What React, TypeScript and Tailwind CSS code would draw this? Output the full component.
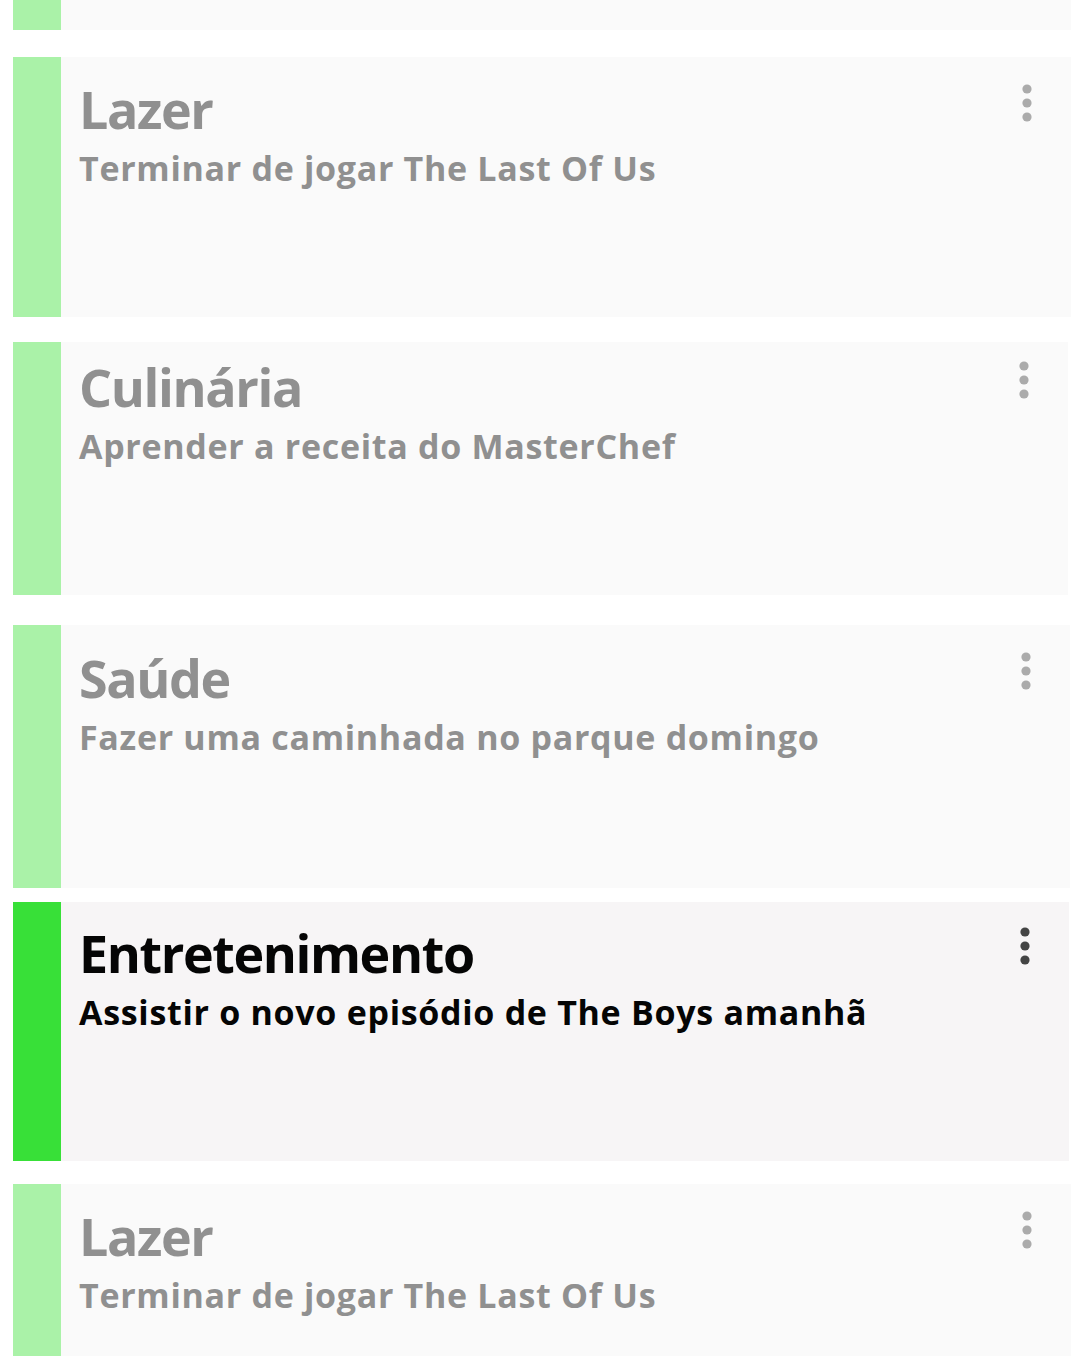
import React from "react";

type Item = {
  title: string;
  text: string;
  active?: boolean;
  box: string;
  pad: string;
  dots: string;
};

const items: Item[] = [
  { title: "", text: "", box: "h-[30px] mr-[9px]", pad: "", dots: "" },
  { title: "Lazer", text: "Terminar de jogar The Last Of Us", box: "h-[260px] mt-[27px] mr-[9px]", pad: "pt-[17px]", dots: "pt-[26px]" },
  { title: "Culinária", text: "Aprender a receita do MasterChef", box: "h-[253px] mt-[25px] mr-[12px]", pad: "pt-[10px]", dots: "pt-[18px]" },
  { title: "Saúde", text: "Fazer uma caminhada no parque domingo", box: "h-[263px] mt-[30px] mr-[10px]", pad: "pt-[18px]", dots: "pt-[26px]" },
  { title: "Entretenimento", text: "Assistir o novo episódio de The Boys amanhã", active: true, box: "h-[259px] mt-[14px] mr-[11px]", pad: "pt-[16px]", dots: "pt-[24px]" },
  { title: "Lazer", text: "Terminar de jogar The Last Of Us", box: "h-[260px] mt-[23px] mr-[9px]", pad: "pt-[17px]", dots: "pt-[26px]" },
];

function Dots({ active }: { active?: boolean }) {
  return (
    <svg width="12" height="40" viewBox="0 0 12 40" className={active ? "fill-[#444444]" : "fill-[#ababab]"}>
      <circle cx="6" cy="6" r="4.6" />
      <circle cx="6" cy="20" r="4.6" />
      <circle cx="6" cy="34" r="4.6" />
    </svg>
  );
}

export default function App() {
  return (
    <div className="w-[1080px] h-[1356px] overflow-hidden bg-white pl-[13px] font-['Open_Sans',sans-serif]">
      {items.map((it, i) => (
        <div
          key={i}
          className={`flex shrink-0 ${it.box} ${it.active ? "bg-[#f7f5f6]" : "bg-[#fafafa]"}`}
        >
          <div className={`w-[48px] shrink-0 ${it.active ? "bg-[#38e038]" : "bg-[#aaf2a8]"}`} />
          {it.title && (
            <div className="flex flex-1 justify-between pl-[18px] pr-[38px]">
              <div className={`${it.pad} font-bold ${it.active ? "text-[#050505]" : "text-[#909090]"}`}>
                <div className="text-[52px] leading-[70px] tracking-[-1.4px]">{it.title}</div>
                <div className="text-[34px] leading-[46px] mt-[1px] tracking-[0.7px]">{it.text}</div>
              </div>
              <div className={it.dots}>
                <Dots active={it.active} />
              </div>
            </div>
          )}
        </div>
      ))}
    </div>
  );
}
